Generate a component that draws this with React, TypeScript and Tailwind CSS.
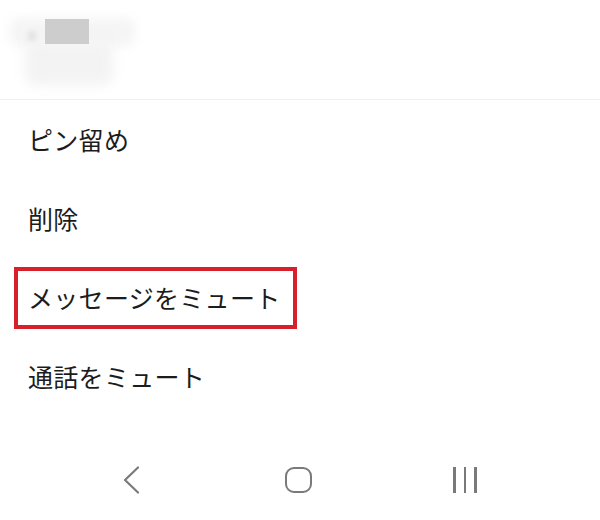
const jp = { fontFamily: '"Noto Sans CJK JP", "Noto Sans", sans-serif' };

function Header() {
  return (
    <div className="relative h-[100px] overflow-hidden border-b border-[#f0f0f0] bg-white">
      <div className="absolute left-[10px] top-[18px] h-[28px] w-[125px] rounded-[8px] bg-[#f5f5f5] blur-[5px]" />
      <div className="absolute left-[25px] top-[40px] h-[45px] w-[88px] rounded-[8px] bg-[#f3f3f3] blur-[6px]" />
      <div className="absolute left-[28px] top-[31px] h-[10px] w-[8px] bg-[#e4e4e4] blur-[2px]" />
      <div className="absolute left-[45px] top-[19px] h-[25px] w-[44px] bg-[#cdcdcd] blur-[0.5px]" />
    </div>
  );
}

function MenuItem({ label, highlighted }: { label: string; highlighted?: boolean }) {
  if (highlighted) {
    return (
      <div className="flex h-[79px] items-center pl-[14px]">
        <div className="flex h-[62px] w-[283px] items-center border-4 border-[#d8202c] pl-[10px]">
          <span className="text-[25px] leading-none tracking-[0.3px] text-[#1c1c1c]" style={jp}>
            {label}
          </span>
        </div>
      </div>
    );
  }
  return (
    <div className="flex h-[79px] items-center pl-[28px]">
      <span className="text-[25px] leading-none tracking-[0.3px] text-[#1c1c1c]" style={jp}>
        {label}
      </span>
    </div>
  );
}

function NavBar() {
  return (
    <div className="flex h-[103px] items-center gap-[127px] pl-[111px] pt-[25px]">
      <div className="flex h-[40px] w-[40px] items-center justify-center">
        <svg width="18" height="28" viewBox="0 0 18 28" fill="none">
          <path d="M16 1.5 L3 14 L16 26.5" stroke="#7a7a7a" strokeWidth="2.2" strokeLinecap="round" strokeLinejoin="round" />
        </svg>
      </div>
      <div className="flex h-[40px] w-[40px] items-center justify-center">
        <div className="h-[26px] w-[27px] rounded-[9px] border-[2.5px] border-[#7a7a7a]" />
      </div>
      <div className="flex h-[40px] w-[40px] items-center justify-center gap-[8px]">
        <div className="h-[26px] w-[2.5px] bg-[#7a7a7a]" />
        <div className="h-[26px] w-[2.5px] bg-[#7a7a7a]" />
        <div className="h-[26px] w-[2.5px] bg-[#7a7a7a]" />
      </div>
    </div>
  );
}

export default function App() {
  return (
    <div className="h-[520px] w-[600px] overflow-hidden bg-white">
      <Header />
      <MenuItem label="ピン留め" />
      <MenuItem label="削除" />
      <MenuItem label="メッセージをミュート" highlighted />
      <MenuItem label="通話をミュート" />
      <NavBar />
    </div>
  );
}
